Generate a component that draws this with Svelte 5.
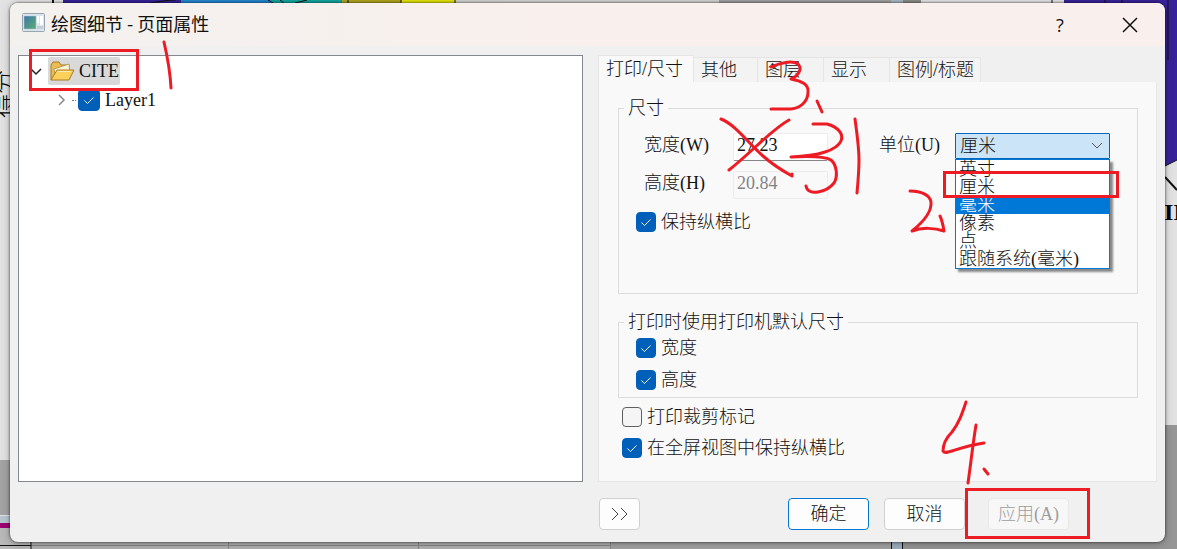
<script lang="ts">
  const tabs = [
    { label: '打印/尺寸', width: 96 },
    { label: '其他', width: 64 },
    { label: '图层', width: 66 },
    { label: '显示', width: 66 },
    { label: '图例/标题', width: 91 }
  ];
  const units = ['英寸', '厘米', '毫米', '像素', '点', '跟随系统(毫米)'];

  let activeTab = $state(0);
  let unit = $state('厘米');
  let hovered = $state('毫米');
  let listOpen = $state(true);
  let width = $state('27.23');
  let height = $state('20.84');
  let keepRatio = $state(true);
  let printerWidth = $state(true);
  let printerHeight = $state(true);
  let cropMarks = $state(false);
  let keepFullScreen = $state(true);
  let layerVisible = $state(true);

  function pickUnit(name: string): void {
    unit = name;
    listOpen = false;
  }
</script>

{#snippet check(label: string, checked: boolean, toggle: () => void)}
  <label class="check">
    <input type="checkbox" {checked} onchange={toggle} />
    <span>{label}</span>
  </label>
{/snippet}

<div class="desktop">
  <svg class="backdrop" viewBox="0 0 1177 549" preserveAspectRatio="none" aria-hidden="true">
    <rect width="1177" height="549" fill="#e2e2e2" />
    <rect x="52" width="2" height="4" fill="#111" />
    <rect x="63" width="118" height="4" fill="#35229a" />
    <rect x="181" width="90" height="4" fill="#2386d0" />
    <rect x="271" width="71" height="4" fill="#12a5a0" />
    <rect x="342" width="59" height="4" fill="#b0a51e" />
    <rect x="401" width="54" height="4" fill="#e3e30c" />
    <rect x="455" width="264" height="4" fill="#d2d2d0" />
    <rect x="719" width="172" height="4" fill="#a0a0a0" />
    <rect x="891" width="12" height="4" fill="#a8b8c6" />
    <rect x="903" width="18" height="4" fill="#8c8c88" />
    <path d="M146 4q18 -4 30 -4M268 0l5 3M280 0l4 3M295 3l12 -3M348 0v4M401 0v4M455 0v4M1052 0v4" stroke="#111" fill="none" />
    <path d="M1064 0H1177V160L1165 166H1064Z" fill="#38229a" />
    <path d="M1168 0V60M1105 0V4M1122 0V4M1165 166L1177 160" stroke="#111" />
    <path d="M1165 177L1177 190" stroke="#111" stroke-width="2" />
    <text x="1164" y="220" class="axis-tick">II</text>
    <text transform="translate(12 118) rotate(-90)" class="axis-title">得分</text>
    <rect y="460" width="20" height="55" fill="#a3a3a3" />
    <rect y="516" width="20" height="7" fill="#b8c6d2" />
    <rect y="523" width="20" height="5" fill="#9c0070" />
    <rect y="528" width="32" height="21" fill="#b8b8b8" />
    <rect x="31" y="540" width="580" height="9" fill="#b2b2b2" />
    <rect x="610" y="540" width="282" height="9" fill="#a3a3a3" />
    <rect x="892" y="540" width="10" height="9" fill="#a0b0c0" />
    <rect x="902" y="540" width="275" height="9" fill="#969696" />
    <rect x="1160" y="425" width="17" height="124" fill="#969696" />
    <path d="M31 545.5H610M228.5 540V549M418.5 540V549M610.5 540V549" stroke="#888" />
    <path d="M0 545.5H31M31 540V549M891.5 540V549M902.5 540V549" stroke="#111" />
  </svg>

  <main class="dialog" aria-labelledby="dialog-title">
    <header class="titlebar">
      <svg class="app-icon" viewBox="0 0 23 19" aria-hidden="true">
        <defs>
          <linearGradient id="pane" x1="0" y1="0" x2="1" y2="1">
            <stop offset="0" stop-color="#3f78a8" />
            <stop offset="1" stop-color="#5bab72" />
          </linearGradient>
        </defs>
        <rect x=".5" y=".5" width="22" height="18" rx="1" fill="#dce5ed" stroke="#97a5b0" />
        <rect x="2" y="3" width="12" height="13" fill="url(#pane)" stroke="#b9cbd8" stroke-width=".5" />
        <rect x="15" y="3" width="2" height="7" fill="#fff" />
        <rect x="18" y="3" width="3" height="9" fill="#fff" />
        <rect x="15" y="13" width="6" height="3" fill="#c5ced6" />
      </svg>
      <h1 id="dialog-title">绘图细节 - 页面属性</h1>
      <button type="button" class="caption-btn" aria-label="帮助">?</button>
      <button type="button" class="caption-btn" aria-label="关闭">
        <svg width="16" height="16" viewBox="0 0 16 16"><path d="M1 1L15 15M15 1L1 15" /></svg>
      </button>
    </header>

    <div class="body">
      <section class="tree">
        <div class="node">
          <svg class="chevron" viewBox="0 0 12 12"><path d="M1 4L6 9L11 4" stroke="#222" /></svg>
          <span class="node-label selected">
            <svg class="folder" viewBox="0 0 26 22" aria-hidden="true">
              <path d="M2 20V5L4 2H10L12 5H20V9" fill="#e9bd52" stroke="#a97b20" />
              <path d="M5 9L20 4L21 14L7 19Z" fill="#fff6d8" stroke="#b79a55" />
              <path d="M2 20L8 10H25L20 20Z" fill="#fbd05c" stroke="#a97b20" />
              <path d="M9 11.5H22" stroke="#ffeaa6" />
            </svg>
            CITE
          </span>
        </div>
        <div class="node child">
          <svg class="chevron" viewBox="0 0 12 12"><path d="M4 1L9 6L4 11" stroke="#8a8a8a" /></svg>
          <span class="dots"></span>
          <label class="check layer">
            <input type="checkbox" bind:checked={layerVisible} />
            <span>Layer1</span>
          </label>
        </div>
      </section>

      <section class="settings">
        <div class="tabs" role="tablist">
          {#each tabs as tab, i}
            <button
              type="button"
              role="tab"
              class:active={activeTab === i}
              aria-selected={activeTab === i}
              style="width: {tab.width}px"
              onclick={() => (activeTab = i)}>{tab.label}</button
            >
          {/each}
        </div>

        <div class="panel" role="tabpanel">
          <fieldset class="size">
            <legend>尺寸</legend>
            <div class="fields">
              <label for="width">宽度(W)</label>
              <input id="width" class="text" type="text" bind:value={width} />
              <label for="unit" class="unit-label">单位(U)</label>
              <div class="combo">
                <select id="unit" bind:value={unit}>
                  {#each units as name}
                    <option>{name}</option>
                  {/each}
                </select>
                <svg class="arrow" viewBox="0 0 12 8"><path d="M1 1L6 6L11 1" /></svg>
                {#if listOpen}
                  <div class="options" role="listbox" aria-label="单位">
                    {#each units as name}
                      <button
                        type="button"
                        role="option"
                        aria-selected={unit === name}
                        class:hovered={hovered === name}
                        onmouseenter={() => (hovered = name)}
                        onclick={() => pickUnit(name)}>{name}</button
                      >
                    {/each}
                  </div>
                {/if}
              </div>
              <label for="height">高度(H)</label>
              <input id="height" class="text" type="text" bind:value={height} disabled={keepRatio} />
            </div>
            <div class="checks inset">
              {@render check('保持纵横比', keepRatio, () => (keepRatio = !keepRatio))}
            </div>
          </fieldset>

          <fieldset class="printer">
            <legend>打印时使用打印机默认尺寸</legend>
            <div class="checks inset">
              {@render check('宽度', printerWidth, () => (printerWidth = !printerWidth))}
              {@render check('高度', printerHeight, () => (printerHeight = !printerHeight))}
            </div>
          </fieldset>

          <div class="checks loose">
            {@render check('打印裁剪标记', cropMarks, () => (cropMarks = !cropMarks))}
            {@render check('在全屏视图中保持纵横比', keepFullScreen, () => (keepFullScreen = !keepFullScreen))}
          </div>
        </div>
      </section>

      <footer class="actions">
        <button type="button" class="btn more" aria-label="更多">
          <svg width="18" height="12" viewBox="0 0 18 12"><path d="M1 0L7 6L1 12M10 0L16 6L10 12" /></svg>
        </button>
        <button type="button" class="btn primary">确定</button>
        <button type="button" class="btn">取消</button>
        <button type="button" class="btn apply" disabled>应用(A)</button>
      </footer>
    </div>
  </main>

  <!-- red pen notes over the dialog -->
  <svg class="ink" viewBox="0 0 1177 549" preserveAspectRatio="none" aria-hidden="true">
    <g class="boxes">
      <rect x="30.5" y="50.5" width="107" height="39" />
      <rect x="944.5" y="172.5" width="173" height="24" />
      <rect x="966.5" y="489.5" width="122" height="48" />
    </g>
    <path d="M164 42C167 55 170 68 171 88" />
    <path d="M910 191C921 191 930 195 931 202C932 213 922 223 912 231C922 227 935 228 944 231C943 225 942 220 940 216" />
    <path d="M771 67C780 63 792 60 798 64C803 69 798 76 791 79C801 81 809 84 808 92C808 101 801 108 791 109H771" />
    <path d="M817 101L822 112" />
    <path d="M721 119C736 125 748 143 763 156C773 165 783 171 792 176V174" />
    <path d="M789 120C771 130 753 151 729 170" />
    <path d="M813 124H827C838 127 844 134 841 141C837 150 819 156 791 157C810 156 824 156 831 160C837 165 838 177 834 183C827 192 808 197 806 186" />
    <path d="M855 119C857 134 859 147 859 160C859 171 858 182 857 193" />
    <path d="M966 402C962 414 959 423 952 432C946 438 943 444 943 451C946 456 956 447 984 443" />
    <path d="M976 425C973 443 971 462 968 483" />
    <path d="M984 469L988 474" />
  </svg>
</div>

<style>
  :global(body) {
    font-family: 'Liberation Serif', 'Noto Sans CJK SC', serif;
    font-size: 18px;
    font-weight: 300;
    line-height: 24px;
    color: #111;
  }

  .desktop {
    position: relative;
    display: flex;
    box-sizing: border-box;
    min-height: 100vh;
    padding: 3px 12px 7px 10px;
    overflow: hidden;
  }

  .backdrop,
  .ink {
    position: absolute;
    inset: 0;
    width: 100%;
    height: 100%;
  }

  .axis-tick {
    font-size: 24px;
    font-weight: 700;
  }

  .axis-title {
    font-size: 24px;
  }

  .ink {
    z-index: 2;
    pointer-events: none;
    fill: none;
    stroke: #ed1c24;
    stroke-width: 3;
    stroke-linecap: round;
    stroke-linejoin: round;
  }

  .boxes {
    stroke-linejoin: miter;
  }

  .dialog {
    position: relative;
    flex: 1;
    display: flex;
    flex-direction: column;
    min-width: 0;
    background: #f0f0f0;
    border-radius: 8px;
    box-shadow: 0 0 2px 1px rgba(0, 0, 0, 0.35), 0 2px 8px rgba(0, 0, 0, 0.25);
  }

  .titlebar {
    display: flex;
    align-items: center;
    height: 43px;
    padding-left: 12px;
    background: linear-gradient(90deg, #f3f1ee, #f9f0ed 50%);
    border-radius: 8px 8px 0 0;
  }

  .app-icon {
    width: 23px;
    height: 19px;
    margin-bottom: 4px;
  }

  h1 {
    flex: 1;
    margin: 0 0 4px 6px;
    font-family: 'Noto Sans CJK SC', sans-serif;
    font-size: 18px;
    font-weight: 400;
  }

  .caption-btn {
    display: grid;
    place-items: center;
    width: 70px;
    height: 40px;
    padding: 0;
    border: 0;
    background: none;
    font-family: 'Open Sans', sans-serif;
    font-size: 18px;
    color: #111;
  }

  .caption-btn path {
    stroke: #111;
    stroke-width: 1.5;
  }

  .body {
    flex: 1;
    display: grid;
    grid-template-columns: minmax(0, 565fr) minmax(0, 559fr);
    grid-template-rows: 1fr auto;
    column-gap: 15px;
    padding: 9px 8px 12px;
  }

  .tree {
    padding: 1px 0 0 11px;
    border: 1px solid #828790;
    background: #fff;
  }

  .node {
    display: flex;
    align-items: center;
    height: 28px;
    margin-bottom: 1px;
  }

  .child {
    padding-left: 25px;
  }

  .chevron {
    width: 12px;
    height: 12px;
    fill: none;
    stroke-width: 1.5;
  }

  .node-label {
    display: flex;
    align-items: center;
    gap: 4px;
    height: 28px;
    margin-left: 6px;
    padding: 0 1px;
  }

  .selected {
    background: #d9d9d9;
    border-radius: 2px;
  }

  .folder {
    width: 26px;
    height: 22px;
  }

  .dots {
    width: 4px;
    margin: 0 2px 0 5px;
    border-top: 1px dotted #777;
  }

  .check {
    display: flex;
    align-items: center;
    gap: 5px;
    height: 20px;
    white-space: nowrap;
  }

  .check input {
    appearance: none;
    flex: none;
    width: 20px;
    height: 20px;
    margin: 0;
    border: 1px solid #5f5f5f;
    border-radius: 4px;
    background: #f5f5f5;
  }

  .check input:checked {
    border-color: #005fb8;
    background: #005fb8 url("data:image/svg+xml,%3Csvg xmlns='http://www.w3.org/2000/svg' viewBox='0 0 12 12'%3E%3Cpath d='M1.5 6.5L4.5 9.5L10.5 3.5' fill='none' stroke='white'/%3E%3C/svg%3E") center / 12px no-repeat;
  }

  .layer input {
    width: 22px;
    height: 22px;
  }

  .settings {
    display: flex;
    flex-direction: column;
  }

  .tabs {
    display: flex;
    align-items: flex-end;
    height: 27px;
  }

  .tabs button {
    box-sizing: border-box;
    height: 25px;
    padding: 0 0 0 7px;
    border: solid #e5e5e5;
    border-width: 1px 1px 0 0;
    background: #f3f3f3;
    font: inherit;
    line-height: 24px;
    color: inherit;
    text-align: left;
    white-space: nowrap;
  }

  .tabs .active {
    height: 27px;
    border-left-width: 1px;
    background: #f9f9f9;
  }

  .panel {
    flex: 1;
    padding: 14px 18px 20px 19px;
    border: 1px solid #e5e5e5;
    border-top-width: 0;
    background: #f9f9f9;
  }

  fieldset {
    box-sizing: border-box;
    min-width: 0;
    margin: 0;
    border: 1px solid #dcdcdc;
  }

  legend {
    padding: 0 4px;
  }

  .size {
    height: 198px;
    padding: 13px 27px 0 5px;
  }

  .printer {
    margin-top: 16px;
    padding: 4px 5px 7px;
  }

  .fields {
    display: grid;
    grid-template-columns: 89px 95px 1fr 155px;
    row-gap: 10px;
    padding-left: 20px;
  }

  .fields label {
    line-height: 25px;
  }

  .unit-label {
    padding-right: 15px;
    text-align: right;
  }

  .text {
    box-sizing: border-box;
    width: 95px;
    height: 28px;
    padding: 0 3px 4px;
    border: 1px solid #ececec;
    border-bottom-color: #868686;
    border-radius: 2px;
    background: #fff;
    font: inherit;
    color: inherit;
  }

  .text:disabled {
    border-color: #ececec;
    background: #f9f9f9;
    color: #838383;
  }

  .combo {
    position: relative;
  }

  select {
    appearance: none;
    box-sizing: border-box;
    display: block;
    width: 100%;
    height: 26px;
    padding: 0 4px;
    border: 1px solid #0067b8;
    border-radius: 1px;
    background: #cce4f7;
    font: inherit;
    line-height: 24px;
    color: inherit;
  }

  .arrow {
    position: absolute;
    top: 9px;
    right: 7px;
    width: 12px;
    height: 8px;
    fill: none;
    stroke: #555;
    pointer-events: none;
  }

  .options {
    position: absolute;
    z-index: 1;
    top: 26px;
    left: 0;
    right: 0;
    border: 1px solid #0078d7;
    background: #fff;
    box-shadow: 3px 3px 2px rgba(0, 0, 0, 0.45);
  }

  .options button {
    display: block;
    width: 100%;
    height: 18px;
    padding: 0 3px;
    border: 0;
    background: none;
    font: inherit;
    line-height: 18px;
    color: inherit;
    text-align: left;
    white-space: nowrap;
  }

  .options .hovered {
    background: #0078d7;
    color: #fff;
  }

  .checks {
    display: flex;
    flex-direction: column;
    align-items: flex-start;
    gap: 12px;
  }

  .inset {
    padding-left: 12px;
  }

  .size .inset {
    padding-top: 13px;
  }

  .loose {
    gap: 11px;
    padding: 9px 0 0 4px;
  }

  .actions {
    grid-column: 2;
    display: flex;
    gap: 15px;
    padding: 16px 88px 0 1px;
  }

  .btn {
    box-sizing: border-box;
    width: 81px;
    height: 32px;
    padding: 0;
    border: 1px solid #d0d0d0;
    border-radius: 4px;
    background: #fdfdfd;
    font: inherit;
    color: inherit;
    white-space: nowrap;
  }

  .more {
    display: grid;
    place-items: center;
    width: 41px;
    margin-right: auto;
  }

  .more path {
    fill: none;
    stroke: #444;
  }

  .primary {
    border-color: #0078d4;
  }

  .apply {
    margin-left: 8px;
  }

  .btn:disabled {
    border-color: #e8e8e8;
    background: #f7f7f7;
    color: #9d9d9d;
  }
</style>
